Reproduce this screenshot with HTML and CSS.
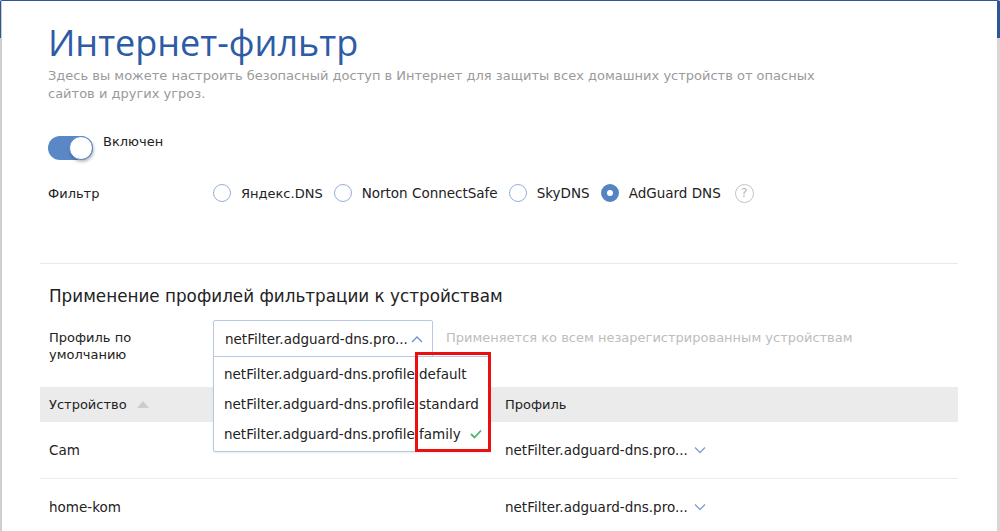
FILE: index.html
```html
<!DOCTYPE html>
<html lang="ru">
<head>
<meta charset="utf-8">
<title>Интернет-фильтр</title>
<link rel="stylesheet" href="styles.css">
</head>
<body>
<div class="window">
  <main class="content">
    <h1 class="title">Интернет-фильтр</h1>
    <p class="desc">Здесь вы можете настроить безопасный доступ в Интернет для защиты всех домашних устройств от опасных сайтов и других угроз.</p>

    <div class="toggle-row">
      <span class="toggle"><span class="knob"></span></span>
      <span class="toggle-label">Включен</span>
    </div>

    <div class="field-row">
      <span class="field-label">Фильтр</span>
      <div class="radios">
        <label class="radio"><span class="dot"></span>Яндекс.DNS</label>
        <label class="radio lat"><span class="dot"></span>Norton ConnectSafe</label>
        <label class="radio lat"><span class="dot"></span>SkyDNS</label>
        <label class="radio lat"><span class="dot checked"></span>AdGuard DNS</label>
        <span class="help">?</span>
      </div>
    </div>

    <section class="profiles">
      <h2 class="section-title">Применение профилей фильтрации к устройствам</h2>

      <div class="default-row">
        <span class="field-label two-line">Профиль по умолчанию</span>
        <div class="select-wrap lat">
          <div class="select open">
            <span>netFilter.adguard-dns.pro...</span>
            <svg class="chev" width="12" height="8" viewBox="0 0 12 8"><path d="M1 7 L6 2 L11 7" fill="none" stroke="#6f95cc" stroke-width="1.4"/></svg>
          </div>
          <ul class="menu">
            <li>netFilter.adguard-dns.profile.default</li>
            <li>netFilter.adguard-dns.profile.standard</li>
            <li>netFilter.adguard-dns.profile.family <svg class="check" width="12" height="10" viewBox="0 0 12 10"><path d="M1 5 L4.5 8.5 L11 1.5" fill="none" stroke="#4cb56a" stroke-width="1.8"/></svg></li>
          </ul>
          <div class="annot"></div>
        </div>
        <span class="hint">Применяется ко всем незарегистрированным устройствам</span>
      </div>

      <div class="table">
        <div class="thead">
          <div class="cell">Устройство <span class="sort"></span></div>
          <div class="cell">Профиль</div>
        </div>
        <div class="trow lat">
          <div class="cell">Cam</div>
          <div class="cell">netFilter.adguard-dns.pro... <svg class="chev-down" width="12" height="8" viewBox="0 0 12 8"><path d="M1 1.5 L6 6.5 L11 1.5" fill="none" stroke="#7c9fd0" stroke-width="1.3"/></svg></div>
        </div>
        <div class="trow lat">
          <div class="cell">home-kom</div>
          <div class="cell">netFilter.adguard-dns.pro... <svg class="chev-down" width="12" height="8" viewBox="0 0 12 8"><path d="M1 1.5 L6 6.5 L11 1.5" fill="none" stroke="#7c9fd0" stroke-width="1.3"/></svg></div>
        </div>
      </div>
    </section>
  </main>
</div>
</body>
</html>
```

FILE: styles.css
```css
html, body {
  margin: 0;
  padding: 0;
  height: 100%;
  overflow: hidden;
  background: #fff;
}

body {
  font-family: "DejaVu Sans", Verdana, sans-serif;
  font-size: 13px;
  color: #222;
}

.lat {
  font-size: 13.5px;
}

.window {
  position: relative;
  height: 100%;
  box-sizing: border-box;
  border-top: 1px solid #2b5797;
  border-left: 2px solid #cfcfcf;
  border-right: 3px solid #d6d6d6;
}

.window::before,
.window::after {
  content: "";
  position: absolute;
  top: 0;
  height: 37px;
  background: #2b5797;
}

.window::before {
  left: -2px;
  width: 1px;
}

.window::after {
  right: -3px;
  width: 3px;
}

.content {
  margin-left: 38px;
  width: 918px;
}

.title {
  margin: 20px 0 0 8px;
  font-family: "Open Sans", "DejaVu Sans", sans-serif;
  font-size: 36px;
  line-height: 44px;
  font-weight: normal;
  color: #2d5ba6;
}

.desc {
  margin: 2px 0 0 8px;
  max-width: 790px;
  line-height: 18px;
  color: #9a9a9a;
}

.toggle-row {
  display: flex;
  align-items: flex-start;
  gap: 10px;
  margin: 30px 0 0 8px;
}

.toggle {
  position: relative;
  width: 45px;
  height: 24px;
  margin-top: 3px;
  border-radius: 12px;
  background: #5a87c5;
}

.knob {
  position: absolute;
  right: 0;
  top: 0;
  width: 24px;
  height: 24px;
  border-radius: 50%;
  background: #fff;
  box-sizing: border-box;
  border: 1px solid #5a87c5;
  box-shadow: 1px 2px 3px rgba(0, 0, 0, 0.25);
}

.toggle-label {
  line-height: 18px;
}

.field-row {
  display: flex;
  align-items: center;
  margin: 23px 0 0 8px;
  height: 20px;
}

.field-label {
  width: 165px;
  flex: none;
}

.radios {
  display: flex;
  align-items: center;
  gap: 11px;
}

.radio {
  display: flex;
  align-items: center;
  gap: 10px;
}

.dot {
  width: 18px;
  height: 18px;
  box-sizing: border-box;
  border: 1px solid #95b0da;
  border-radius: 50%;
  background: #fff;
}

.dot.checked {
  border: 6px solid #5583c4;
  background: #fff;
}

.help {
  width: 19px;
  height: 19px;
  margin-left: 3px;
  box-sizing: border-box;
  border: 1px solid #c4c4c4;
  border-radius: 50%;
  color: #b5b5b5;
  font-size: 12px;
  line-height: 17px;
  text-align: center;
}

.profiles {
  margin-top: 60px;
  border-top: 1px solid #e6eaef;
}

.section-title {
  margin: 21px 0 0 9px;
  font-size: 16.8px;
  line-height: 22px;
  font-weight: normal;
  color: #222;
}

.default-row {
  display: flex;
  align-items: flex-start;
  margin: 13px 0 0 9px;
}

.two-line {
  width: 140px;
  margin-right: 24px;
  padding-top: 9px;
  line-height: 17px;
}

.select-wrap {
  position: relative;
  width: 220px;
  flex: none;
}

.select {
  box-sizing: border-box;
  height: 37px;
  padding: 0 9px 0 11px;
  display: flex;
  align-items: center;
  justify-content: space-between;
  border: 1px solid #b6c9e4;
  border-radius: 2px 2px 0 0;
}

.menu {
  position: absolute;
  left: 0;
  top: 36px;
  z-index: 2;
  width: 277px;
  box-sizing: border-box;
  margin: 0;
  padding: 2px 0;
  list-style: none;
  background: #fff;
  border: 1px solid #b6c9e4;
  border-radius: 0 0 2px 2px;
  box-shadow: 0 1px 2px rgba(0, 0, 0, 0.08);
}

.menu li {
  height: 30px;
  line-height: 30px;
  padding-left: 10px;
  white-space: nowrap;
  display: flex;
  align-items: center;
  gap: 9px;
}

.annot {
  position: absolute;
  z-index: 3;
  left: 202px;
  top: 32px;
  width: 76px;
  height: 100px;
  box-sizing: border-box;
  border: 3px solid #ea1010;
}

.hint {
  margin-left: 13px;
  padding-top: 9px;
  line-height: 17px;
  font-size: 13px;
  color: #bdbdbd;
}

.table {
  margin-top: 24px;
}

.thead,
.trow {
  display: grid;
  grid-template-columns: 456px 1fr;
  align-items: center;
}

.thead {
  height: 35px;
  background: #ebebeb;
}

.trow {
  height: 56px;
  border-bottom: 1px solid #e8edf3;
}

.cell {
  padding-left: 9px;
  display: flex;
  align-items: center;
  gap: 6px;
}

.sort {
  width: 0;
  height: 0;
  margin-left: 4px;
  border-left: 6px solid transparent;
  border-right: 6px solid transparent;
  border-bottom: 7px solid #cccccc;
}
```
